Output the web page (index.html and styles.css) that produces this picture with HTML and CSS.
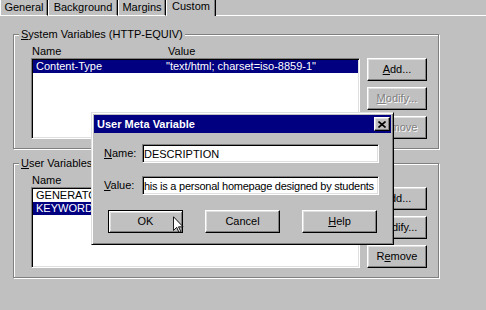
FILE: index.html
```html
<!DOCTYPE html>
<html lang="en">
<head>
    <meta charset="UTF-8">
    <meta name="viewport" content="width=device-width, initial-scale=1.0">
    <title>Page Properties - Custom</title>
    <link rel="stylesheet" href="styles.css">
</head>
<body>

    <div class="tabs">
        <div class="tab tab-general">General</div>
        <div class="tab tab-background">Background</div>
        <div class="tab tab-margins">Margins</div>
        <div class="tab tab-custom active">Custom</div>
        <div class="tab-fill"></div>
    </div>

    <div class="page">
        <fieldset class="group">
            <legend><u>S</u>ystem Variables (HTTP-EQUIV)</legend>
            <div class="group-body">
                <div class="cols"><span class="col-name">Name</span><span>Value</span></div>
                <div class="list">
                    <div class="row selected"><span class="cell-name">Content-Type</span><span>"text/html; charset=iso-8859-1"</span></div>
                </div>
                <div class="side-btns">
                    <button class="btn"><u>A</u>dd...</button>
                    <button class="btn" disabled><u>M</u>odify...</button>
                    <button class="btn" disabled>R<u>e</u>move</button>
                </div>
            </div>
        </fieldset>

        <fieldset class="group group-user">
            <legend><u>U</u>ser Variables</legend>
            <div class="group-body">
                <div class="cols"><span class="col-name">Name</span><span>Value</span></div>
                <div class="list">
                    <div class="row"><span class="cell-name">GENERATOR</span><span>"Microsoft FrontPage Express 2.0"</span></div>
                    <div class="row selected"><span class="cell-name">KEYWORDS</span><span>"students, homepage"</span></div>
                </div>
                <div class="side-btns">
                    <button class="btn"><u>A</u>dd...</button>
                    <button class="btn"><u>M</u>odify...</button>
                    <button class="btn">R<u>e</u>move</button>
                </div>
            </div>
        </fieldset>
    </div>

    <!-- dialog window on top of the property page -->
    <div class="dialog">
        <div class="titlebar">
            <span>User Meta Variable</span>
            <button class="close">
                <svg width="8" height="7" viewBox="0 0 8 7"><path d="M0.5 0.5 L7.5 6.5 M7.5 0.5 L0.5 6.5" stroke="#000" stroke-width="1.6" fill="none"/></svg>
            </button>
        </div>
        <div class="dlg-body">
            <div class="field">
                <label for="meta-name"><u>N</u>ame:</label>
                <input class="edit" id="meta-name" type="text" value="DESCRIPTION">
            </div>
            <div class="field">
                <label for="meta-value"><u>V</u>alue:</label>
                <input class="edit edit-long" id="meta-value" type="text" value="his is a personal homepage designed by students">
            </div>
            <div class="dlg-btns">
                <button class="btn btn-wide btn-default">OK</button>
                <button class="btn btn-wide">Cancel</button>
                <button class="btn btn-wide"><u>H</u>elp</button>
            </div>
        </div>
    </div>

    <svg class="cursor" width="11" height="18" viewBox="0 0 12 19">
        <path d="M0.5 0.5 L0.5 15.5 L4 12 L6.5 17.5 L8.5 16.5 L6 11.5 L11 11.5 Z" fill="#fff" stroke="#000" stroke-width="1"/>
    </svg>

</body>
</html>
```

FILE: styles.css
```css
body {
    margin: 0;
    height: 310px;
    overflow: hidden;
    position: relative;
    background-color: #c0c0c0;
    color: #000;
    font-family: "Liberation Sans", Arial, sans-serif;
    font-size: 11px;
    line-height: 13px;
}
u {
    text-decoration-thickness: 1px;
    text-underline-offset: 1px;
}

/* tabs */
.tabs {
    display: flex;
    height: 16px;
}
.tab {
    box-sizing: border-box;
    height: 16px;
    padding-top: 1px;
    text-align: center;
    border-left: 1px solid #fff;
    border-right: 1px solid #000;
    border-bottom: 1px solid #fff;
    box-shadow: inset -1px 0 #808080;
}
.tab-general { width: 48px; }
.tab-background { width: 70px; }
.tab-margins { width: 48px; }
.tab-custom { width: 50px; }
.tab.active {
    border-bottom: none;
    padding-top: 0;
}
.tab-fill {
    flex: 1;
    border-bottom: 1px solid #fff;
}

/* property page */
.page {
    padding: 12px 0 0 13px;
}
.group {
    box-sizing: border-box;
    width: 426px;
    margin: 0;
    padding: 0;
    border: 1px solid #808080;
    box-shadow: 1px 1px #fff, inset 1px 1px #fff;
    min-inline-size: auto;
}
.group-user {
    margin-top: 8px;
}
.group legend {
    margin-left: 5px;
    padding: 0 2px;
    background-color: #c0c0c0;
    line-height: 13px;
}
.group-body {
    display: grid;
    grid-template-columns: 329px 60px;
    grid-template-rows: 13px 81px;
    column-gap: 7px;
    padding: 4px 11px 9px 17px;
}
.cols {
    grid-column: 1;
    padding-left: 1px;
    display: flex;
}
.col-name {
    width: 136px;
}
.list {
    grid-column: 1;
    grid-row: 2;
    box-sizing: border-box;
    background-color: #fff;
    border: 1px solid;
    border-color: #808080 #fff #fff #808080;
    box-shadow: inset 1px 1px #000, inset -1px -1px #dfdfdf;
    padding: 1px;
}
.row {
    display: flex;
    height: 13px;
    padding-left: 3px;
    white-space: nowrap;
    overflow: hidden;
}
.row.selected {
    background-color: #000080;
    color: #fff;
}
.cell-name {
    width: 130px;
}
.side-btns {
    grid-column: 2;
    grid-row: 2;
    display: flex;
    flex-direction: column;
    gap: 6px;
}

/* buttons */
.btn {
    box-sizing: border-box;
    width: 60px;
    height: 23px;
    padding: 0;
    font: inherit;
    color: #000;
    background-color: #c0c0c0;
    border: 1px solid;
    border-color: #fff #000 #000 #fff;
    box-shadow: inset -1px -1px #808080, inset 1px 1px #dfdfdf;
}
.btn:disabled {
    color: #808080;
    text-shadow: 1px 1px #fff;
}
.btn-wide {
    width: 75px;
}
.btn-default {
    border-color: #000;
    box-shadow: inset 1px 1px #fff, inset -1px -1px #808080, inset 2px 2px #dfdfdf;
}

/* dialog window */
.dialog {
    position: absolute;
    left: 91px;
    top: 112px;
    width: 303px;
    box-sizing: border-box;
    padding: 2px;
    background-color: #c0c0c0;
    border: 1px solid;
    border-color: #dfdfdf #000 #000 #dfdfdf;
    box-shadow: inset 1px 1px #fff, inset -1px -1px #808080;
}
.titlebar {
    height: 18px;
    display: flex;
    align-items: center;
    justify-content: space-between;
    padding: 0 1px 0 3px;
    background-color: #000080;
    color: #fff;
    font-weight: bold;
}
.close {
    box-sizing: border-box;
    width: 16px;
    height: 14px;
    padding: 0;
    display: flex;
    align-items: center;
    justify-content: center;
    background-color: #c0c0c0;
    border: 1px solid;
    border-color: #fff #000 #000 #fff;
    box-shadow: inset -1px -1px #808080, inset 1px 1px #dfdfdf;
}
.dlg-body {
    padding: 11px 12px 9px 10px;
}
.field {
    display: flex;
    align-items: center;
    height: 19px;
}
.field + .field {
    margin-top: 13px;
}
.field label {
    width: 38px;
}
.edit {
    box-sizing: border-box;
    width: 237px;
    height: 19px;
    padding: 0 1px;
    font: inherit;
    color: #000;
    background-color: #fff;
    border: 1px solid;
    border-color: #808080 #fff #fff #808080;
    box-shadow: inset 1px 1px #000, inset -1px -1px #dfdfdf;
    outline: none;
}
.edit-long {
    letter-spacing: -0.25px;
}
.dlg-btns {
    display: flex;
    gap: 22px;
    margin-top: 15px;
    padding-left: 4px;
}

.cursor {
    position: absolute;
    left: 173px;
    top: 216px;
}
```
